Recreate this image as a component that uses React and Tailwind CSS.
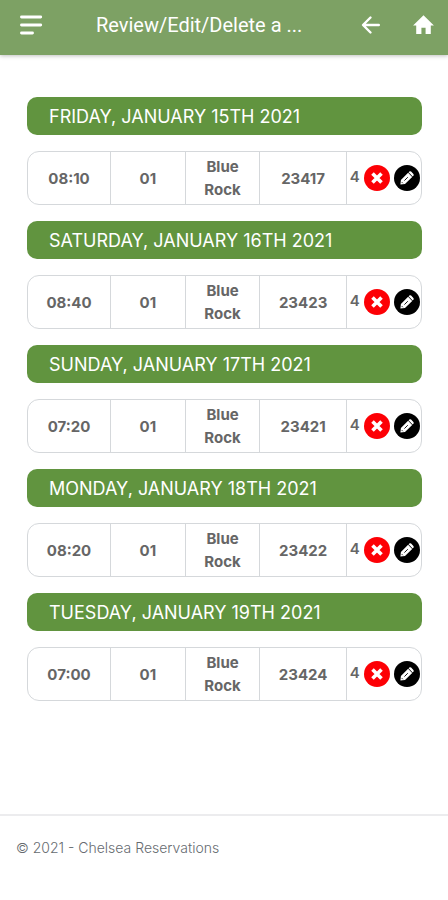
import { clsx } from "clsx";

const bookings = [
  { day: "FRIDAY, JANUARY 15TH 2021", time: "08:10", tee: "01", course: "Blue Rock", ref: "23417", players: 4 },
  { day: "SATURDAY, JANUARY 16TH 2021", time: "08:40", tee: "01", course: "Blue Rock", ref: "23423", players: 4 },
  { day: "SUNDAY, JANUARY 17TH 2021", time: "07:20", tee: "01", course: "Blue Rock", ref: "23421", players: 4 },
  { day: "MONDAY, JANUARY 18TH 2021", time: "08:20", tee: "01", course: "Blue Rock", ref: "23422", players: 4 },
  { day: "TUESDAY, JANUARY 19TH 2021", time: "07:00", tee: "01", course: "Blue Rock", ref: "23424", players: 4 },
];

function Header() {
  return (
    <header className="flex h-[55px] items-center bg-[#7da164] pr-3 pb-[6px] pl-5 text-white shadow-[0_1px_4px_rgba(0,0,0,0.25)]">
      <button aria-label="Menu">
        <svg width="23" height="20" viewBox="0 0 23 20" fill="none" stroke="currentColor" strokeWidth="2.9" strokeLinecap="round">
          <path d="M1.5 2h19.2M1.5 10h19.2M1.5 18h11" />
        </svg>
      </button>
      <h1 className="ml-[53px] flex-1 truncate font-['Roboto',sans-serif] text-xl">Review/Edit/Delete a ...</h1>
      <a href="#back" aria-label="Back" className="mr-7">
        <svg width="24" height="24" viewBox="0 0 24 24" fill="none" stroke="currentColor" strokeWidth="2.4" strokeLinecap="round" strokeLinejoin="round">
          <path d="M19.8 12H4.5M11.5 4.5L4 12l7.5 7.5" />
        </svg>
      </a>
      <a href="#home" aria-label="Home">
        <svg width="25" height="25" viewBox="0 0 24 24" fill="currentColor">
          <path d="M10 21v-6h4v6h5v-8h3L12 3 2 13h3v8z" />
        </svg>
      </a>
    </header>
  );
}

function Cell({ className, children }) {
  return (
    <td className={clsx("border-l border-[#d5d8db] p-0 text-center align-middle", className)}>
      {children}
    </td>
  );
}

function Booking({ booking }) {
  return (
    <section className="mb-4">
      <h2 className="mb-4 flex h-[38px] items-center rounded-[10px] bg-[#61943f] px-[22px] pt-[2px] text-lg font-normal text-white">
        {booking.day}
      </h2>
      <div className="overflow-hidden rounded-xl border border-[#d5d8db]">
        <table className="h-[52px] w-full table-fixed border-collapse text-[15px] leading-[23px] font-bold text-[#666]">
          <tbody>
            <tr>
              <Cell className="w-[21%] border-l-0">{booking.time}</Cell>
              <Cell>{booking.tee}</Cell>
              <Cell className="w-[19%] px-3">{booking.course}</Cell>
              <Cell className="w-[22%]">{booking.ref}</Cell>
              <Cell className="w-[19%]">
                <div className="flex items-center gap-1 pl-[3px]">
                  <span className="pb-1 font-semibold">{booking.players}</span>
                  <button
                    aria-label={`Delete booking ${booking.ref}`}
                    className="flex size-[26px] shrink-0 items-center justify-center rounded-full bg-[#fd0005] text-white"
                  >
                    <svg width="12" height="12" viewBox="0 0 12 12" stroke="currentColor" strokeWidth="3.6">
                      <path d="M1.5 1.5l9 9M10.5 1.5l-9 9" />
                    </svg>
                  </button>
                  <button
                    aria-label={`Edit booking ${booking.ref}`}
                    className="flex size-[26px] shrink-0 items-center justify-center rounded-full bg-black text-white"
                  >
                    <svg width="16" height="16" viewBox="0 0 16 16" fill="currentColor">
                      <path d="M1.4 14.6l.5-4.6 7.2-7.2 4.1 4.1L6 14.1zM9.6 2.3l.7-.7q.9-.8 1.8 0l2.3 2.3q.8.9 0 1.8l-.7.7z" />
                      <path d="M5.4 10.6l3.4-3.4M2.8 12.2l1 1" stroke="#000" strokeWidth="0.9" />
                    </svg>
                  </button>
                </div>
              </Cell>
            </tr>
          </tbody>
        </table>
      </div>
    </section>
  );
}

export default function App() {
  return (
    <div className="flex min-h-screen flex-col bg-white font-['Inter',sans-serif]">
      <Header />
      <main className="flex-1 pt-[42px] pr-[26px] pl-[27px]">
        {bookings.map((booking) => (
          <Booking key={booking.ref} booking={booking} />
        ))}
      </main>
      <footer className="h-[86px] border-t-2 border-[#ececee] px-4 pt-[22px] text-sm font-light text-[#666b70]">
        © 2021 - Chelsea Reservations
      </footer>
    </div>
  );
}
